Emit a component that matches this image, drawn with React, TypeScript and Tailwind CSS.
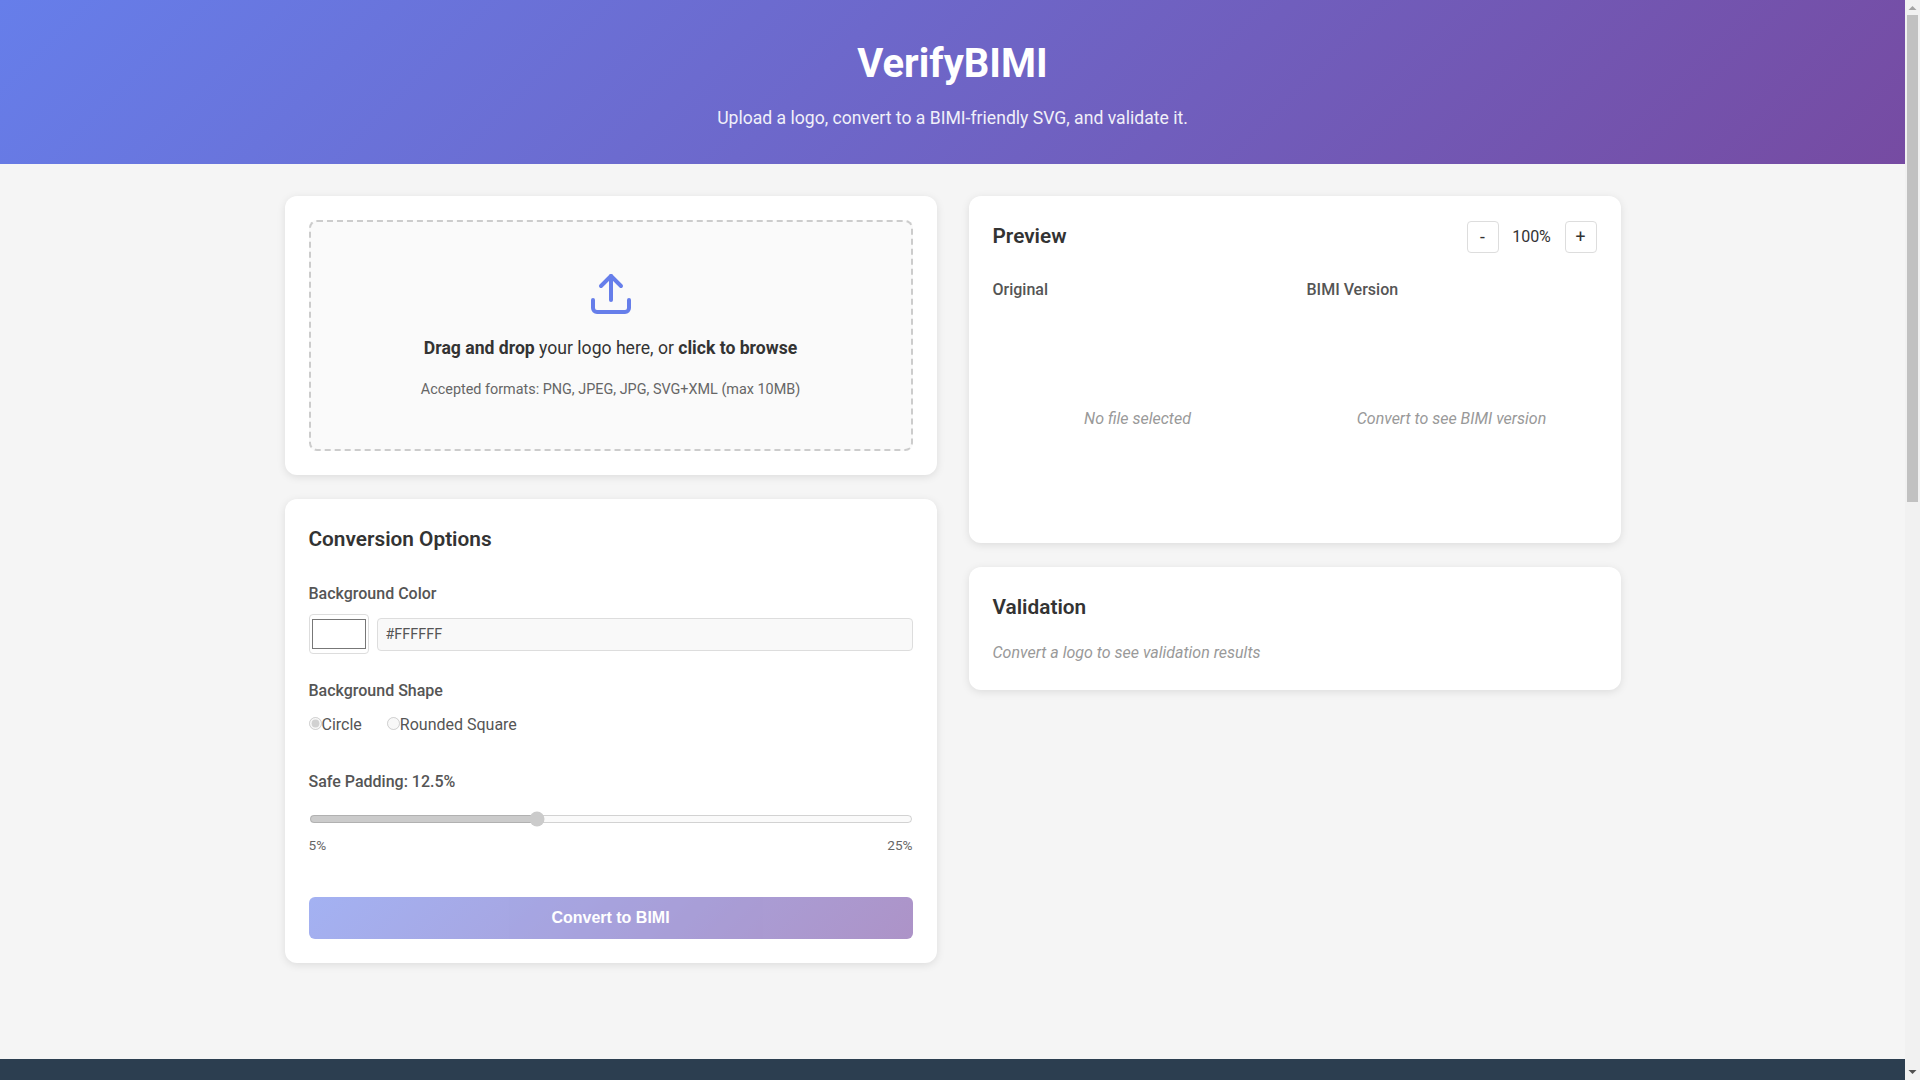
import {Upload} from 'lucide-react'

function Card({children}: {children: React.ReactNode}) {
    return <section className="bg-white rounded-xl p-6 shadow-[0_2px_8px_rgba(0,0,0,0.1)]">{children}</section>
}

function ZoomButton({label}: {label: string}) {
    return (
        <button className="w-8 h-8 bg-white border border-[#dddddd] rounded text-[17.6px] text-[#333333] flex items-center justify-center">
            {label}
        </button>
    )
}

function Radio({label, checked}: {label: string; checked?: boolean}) {
    return (
        <label className="flex items-center text-[#555555]">
            <input type="radio" name="shape" disabled defaultChecked={checked} className="m-0 mb-[2px] w-[13px] h-[13px] appearance-auto" />
            {label}
        </label>
    )
}

// headless run has no native scrollbar, so it's drawn here
function Scrollbar() {
    return (
        <div className="w-[15px] shrink-0 bg-[#f1f1f1] flex flex-col items-center">
            <svg width="15" height="15" viewBox="0 0 15 15" className="shrink-0">
                <path d="M3.5 10h8l-4-4z" fill="#a3a3a3" />
            </svg>
            <div className="w-[11px] h-[487px] bg-[#c1c1c1]" />
            <div className="flex-1" />
            <svg width="15" height="15" viewBox="0 0 15 15" className="shrink-0">
                <path d="M3.5 5h8l-4 4z" fill="#505050" />
            </svg>
        </div>
    )
}

export default function App() {
    return (
        <div className="flex h-screen overflow-hidden bg-[#f5f5f5] font-['Roboto',sans-serif] text-[#333333] text-base leading-[1.6]">
            <div className="flex-1 min-w-0">
                <header className="py-8 text-center text-white bg-[linear-gradient(135deg,#667eea_0%,#764ba2_100%)]">
                    <h1 className="text-[40px] leading-[1.6] font-bold mb-2">VerifyBIMI</h1>
                    <p className="text-[17.6px] leading-[1.6] opacity-90">Upload a logo, convert to a BIMI-friendly SVG, and validate it.</p>
                </header>

                <main className="max-w-[1400px] mx-auto p-8 grid grid-cols-2 gap-8 items-start">
                    <div className="flex flex-col gap-6">
                        <Card>
                            <div className="border-2 border-dashed border-[#cccccc] rounded-lg bg-[#fafafa] flex flex-col items-center py-12">
                                <Upload size={48} strokeWidth={2} className="text-[#667eea]" />
                                <p className="mt-4 text-[17.6px] leading-[1.6] text-[#333333]">
                                    <strong className="font-bold">Drag and drop</strong> your logo here, or <strong className="font-bold">click to browse</strong>
                                </p>
                                <p className="mt-4 text-[14.4px] leading-[1.6] text-[#666666]">Accepted formats: PNG, JPEG, JPG, SVG+XML (max 10MB)</p>
                            </div>
                        </Card>

                        <Card>
                            <h2 className="text-[20.8px] leading-[1.6] font-semibold mb-6">Conversion Options</h2>

                            <div className="mb-6">
                                <label className="block font-medium text-[#555555] mb-2">Background Color</label>
                                <div className="flex items-center gap-2">
                                    <input type="color" disabled defaultValue="#ffffff" className="w-[60px] h-10 p-0 border border-[#dddddd] rounded bg-white" />
                                    <input type="text" disabled defaultValue="#FFFFFF" className="flex-1 h-[33px] px-2 border border-[#dddddd] rounded bg-[#f9f9f9] text-[14.4px] font-['Roboto',sans-serif] text-[#555555]" />
                                </div>
                            </div>

                            <div className="mb-8">
                                <label className="block font-medium text-[#555555] mb-2">Background Shape</label>
                                <div className="flex gap-[25px]">
                                    <Radio label="Circle" checked />
                                    <Radio label="Rounded Square" />
                                </div>
                            </div>

                            <div className="mb-10">
                                <label className="block font-medium text-[#555555] mb-4">Safe Padding: 12.5%</label>
                                <input type="range" disabled min={5} max={25} step={0.5} defaultValue={12.5} className="block w-full h-4 appearance-auto" />
                                <div className="flex justify-between text-[13.6px] leading-[1.6] text-[#666666] mt-2">
                                    <span>5%</span>
                                    <span>25%</span>
                                </div>
                            </div>

                            <button disabled className="block w-full h-[42px] rounded-md text-white text-base font-semibold font-['Liberation_Sans',sans-serif] opacity-60 bg-[linear-gradient(135deg,#667eea_0%,#764ba2_100%)]">
                                Convert to BIMI
                            </button>
                        </Card>
                    </div>

                    <div className="flex flex-col gap-6">
                        <Card>
                            <div className="flex items-center justify-between mb-6">
                                <h2 className="text-[20.8px] leading-[1.6] font-semibold">Preview</h2>
                                <div className="flex items-center gap-3">
                                    <ZoomButton label="-" />
                                    <span className="min-w-[42px] text-center">100%</span>
                                    <ZoomButton label="+" />
                                </div>
                            </div>
                            <div className="grid grid-cols-2 gap-6">
                                <div>
                                    <h3 className="font-medium text-[#555555] mb-4">Original</h3>
                                    <div className="h-[200px] flex items-center justify-center italic text-[#999999]">No file selected</div>
                                </div>
                                <div>
                                    <h3 className="font-medium text-[#555555] mb-4">BIMI Version</h3>
                                    <div className="h-[200px] flex items-center justify-center italic text-[#999999]">Convert to see BIMI version</div>
                                </div>
                            </div>
                        </Card>

                        <Card>
                            <h2 className="text-[20.8px] leading-[1.6] font-semibold mb-4">Validation</h2>
                            <p className="italic text-[#999999]">Convert a logo to see validation results</p>
                        </Card>
                    </div>
                </main>

                <footer className="mt-16 h-40 bg-[#2c3e50]" />
            </div>
            <Scrollbar />
        </div>
    )
}
